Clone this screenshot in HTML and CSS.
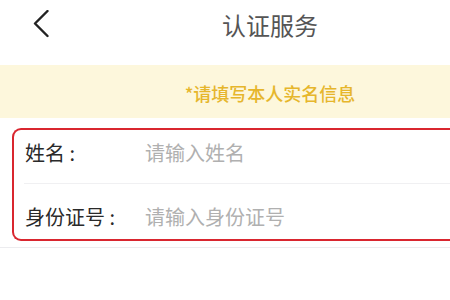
FILE: index.html
```html
<!DOCTYPE html>
<html lang="zh-CN">
<head>
<meta charset="utf-8">
<title>认证服务</title>
<link rel="stylesheet" href="styles.css">
</head>
<body>
<div class="screen">
  <header class="topbar">
    <div class="back">
      <svg class="back-icon" width="18" height="29" viewBox="0 0 18 29" aria-hidden="true">
        <path d="M15.5 1 L3 13.5 L15.5 26" fill="none" stroke="#222" stroke-width="2.4" stroke-linecap="round" stroke-linejoin="round"/>
      </svg>
    </div>
    <h1 class="title">认证服务</h1>
  </header>

  <div class="notice">*请填写本人实名信息</div>

  <div class="form">
    <div class="row">
      <span class="label">姓名 :</span>
      <span class="placeholder">请输入姓名</span>
    </div>
    <div class="divider"></div>
    <div class="row row-second">
      <span class="label">身份证号 :</span>
      <span class="placeholder">请输入身份证号</span>
    </div>
    <div class="highlight"></div>
  </div>
</div>
</body>
</html>
```

FILE: styles.css
```css
html, body {
  margin: 0;
  padding: 0;
  background: #ffffff;
}

body {
  font-family: "Noto Sans CJK SC", "Noto Sans", sans-serif;
  color: #333;
}

.screen {
  width: 450px;
  height: 300px;
  overflow: hidden;
}

.topbar {
  position: relative;
  display: flex;
  align-items: center;
  justify-content: center;
  height: 49px;
  padding-left: 90px;
  margin-bottom: 16px;
}

.back {
  position: absolute;
  left: 32px;
  top: 10px;
}

.back-icon {
  display: block;
}

.title {
  margin: 0;
  font-size: 24px;
  font-weight: 400;
  line-height: 1;
  color: #555;
}

.notice {
  height: 53px;
  display: flex;
  align-items: center;
  justify-content: center;
  padding: 2px 0 0 90px;
  box-sizing: border-box;
  background: #fdf7dc;
  color: #e6b62c;
  font-size: 18px;
  font-weight: 500;
}

.form {
  position: relative;
  margin-top: 3px;
  border-bottom: 1px solid #ececef;
}

.row {
  display: flex;
  align-items: center;
  height: 62px;
  padding-left: 25px;
  font-size: 20px;
}

.row-second {
  height: 63px;
  padding-top: 2px;
  box-sizing: border-box;
}

.label {
  width: 120px;
  flex: none;
  color: #2a2a2a;
}

.placeholder {
  color: #b0b0b0;
}

.divider {
  height: 1px;
  margin-left: 24px;
  background: #f0f0f2;
}

.highlight {
  position: absolute;
  left: 12px;
  top: 7px;
  right: 0;
  height: 113px;
  box-sizing: border-box;
  border: 2px solid #d9262f;
  border-right: none;
  border-radius: 9px 0 0 9px;
}
```
